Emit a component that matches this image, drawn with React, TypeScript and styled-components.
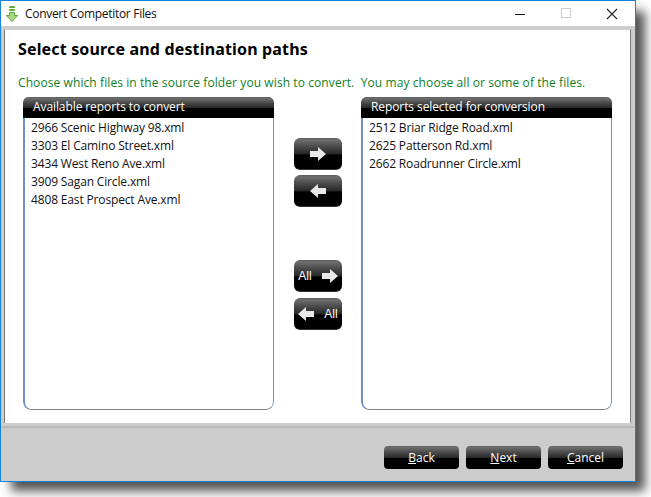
import React from "react";
import styled, { createGlobalStyle } from "styled-components";

const Global = createGlobalStyle`
  html, body { margin: 0; padding: 0; background: #fff; width: 651px; height: 497px; overflow: hidden; }
  * { box-sizing: border-box; }
`;
const glossy = `
  background: linear-gradient(to bottom, #5c5c5c 0%, #6e6e6e 6%, #4a4a4a 28%, #262626 52%, #000 54%, #000 100%);
  color: #fff;
`;
const Win = styled.div`
  width: 636px; height: 482px; border: 1px solid #1883d7;
  background: #cdcdcd; display: flex; flex-direction: column;
  box-shadow: 10px 10px 10px -1px rgba(0,0,0,.68);
  font-family: "Noto Sans", "Open Sans", sans-serif;
`;
const TitleBar = styled.div`
  height: 25px; background: #fff; display: flex; align-items: center; flex: none; padding-left: 5px;
`;
const TitleText = styled.span`
  font-size: 12px; color: #111; margin-left: 7px; font-family: "Open Sans", sans-serif; letter-spacing: -.3px;
`;
const Spacer = styled.div`flex: 1;`;
const WinBtn = styled.div`
  width: 46px; height: 25px; display: flex; align-items: center; justify-content: center;
`;
const Body = styled.div`
  flex: none; height: 394px; margin: 3px 4px 0 3px; background: #fff;
  border-left: 1px solid #7c7c7c; border-right: 1px solid #7c7c7c; border-top: 1px solid #cfcfcf;
  padding: 8px 18px 0 13px; display: flex; flex-direction: column;
`;
const Heading = styled.h1`
  margin: 0; font-size: 16px; line-height: 22px; font-weight: 700; color: #000;
  font-family: "Noto Sans", sans-serif; letter-spacing: .16px;
`;
const Hint = styled.p`
  margin: 15px 0 0; font-size: 12px; line-height: 16px; color: #0f7f1f;
  font-family: "Open Sans", sans-serif; letter-spacing: .09px; white-space: nowrap;
`;
const Columns = styled.div`
  display: flex; margin: 6px 0 0 5px; height: 313px; justify-content: space-between;
`;
const Panel = styled.section`
  width: 251px; height: 313px; display: flex; flex-direction: column;
  border-radius: 5px 5px 8px 8px; overflow: hidden;
`;
const PanelHead = styled.div`
  ${glossy}
  height: 21px; flex: none; font-size: 12px; line-height: 20px; padding-left: 10px; letter-spacing: -.09px;
  font-family: "Open Sans", sans-serif; border-radius: 5px 5px 0 0;
`;
const PanelList = styled.ul`
  flex: 1; margin: 0; padding: 1px 0 0 6px; list-style: none;
  border-left: 2px solid #6a92c7; border-right: 1px solid #6a92c7;
  border-bottom: 1px solid #808080; border-radius: 0 0 8px 8px;
`;
const Item = styled.li`
  font-size: 12px; line-height: 18px; color: #111; font-family: "Open Sans", sans-serif; letter-spacing: -.15px; white-space: nowrap;
`;
const Mid = styled.div`
  width: 48px; display: flex; flex-direction: column; padding-top: 41px; margin-left: 1px;
`;
const Arrow = styled.button<{ $gap: number }>`
  ${glossy}
  width: 48px; height: 32px; margin-top: ${p => p.$gap}px; padding: 0 4px; border: 0; border-radius: 6px;
  border-bottom: 1px solid #333;
  display: flex; align-items: center; justify-content: center; gap: 10px;
  font: 12px "Liberation Sans", sans-serif;
`;
const Footer = styled.div`
  flex: 1; margin-top: 3px; border-top: 2px solid #bbb;
  display: flex; justify-content: flex-end; align-items: flex-start; gap: 7px; padding: 18px 12px 0 0;
  background: #cdcdcd;
`;
const Cmd = styled.button`
  ${glossy}
  width: 75px; height: 23px; border: 0; border-radius: 4px; padding: 0;
  font: 12px/22px "Open Sans", sans-serif; text-align: center;
  u { text-underline-offset: 1px; }
`;
const ArrowIcon = ({ left }: { left?: boolean }) => (
  <svg width="16" height="14" viewBox="0 0 16 14" style={left ? { transform: "scaleX(-1)" } : undefined}>
    <path d="M0 4h8V0l8 7-8 7v-4H0z" fill="#e8e8e8" />
  </svg>
);
const left = ["2966 Scenic Highway 98.xml", "3303 El Camino Street.xml", "3434 West Reno Ave.xml", "3909 Sagan Circle.xml", "4808 East Prospect Ave.xml"];
const right = ["2512 Briar Ridge Road.xml", "2625 Patterson Rd.xml", "2662 Roadrunner Circle.xml"];

export default function App() {
  return (
    <>
      <Global />
      <Win>
        <TitleBar>
          <svg width="12" height="16" viewBox="0 0 12 16">
            <path d="M3.5.5h5v1h-5zM3.5 3.5h5v1h-5z" fill="#d8ecc6" stroke="#5fa83a" />
            <path d="M3.5 6.5h5v3h3L6 15.5.5 9.5h3z" fill="#a8d884" stroke="#5fa83a" />
          </svg>
          <TitleText>Convert Competitor Files</TitleText>
          <Spacer />
          <WinBtn><svg width="12" height="12"><path d="M1 6.5h10" stroke="#111" /></svg></WinBtn>
          <WinBtn><svg width="11" height="11"><rect x=".5" y=".5" width="9" height="9" fill="none" stroke="#ccc" /></svg></WinBtn>
          <WinBtn><svg width="12" height="12"><path d="M1 1l10 10M11 1L1 11" stroke="#222" strokeWidth="1.1" /></svg></WinBtn>
        </TitleBar>
        <Body>
          <Heading>Select source and destination paths</Heading>
          <Hint>Choose which files in the source folder you wish to convert.&nbsp; You may choose all or some of the files.</Hint>
          <Columns>
            <Panel>
              <PanelHead>Available reports to convert</PanelHead>
              <PanelList>{left.map(t => <Item key={t}>{t}</Item>)}</PanelList>
            </Panel>
            <Mid>
              <Arrow $gap={0} aria-label="Add"><ArrowIcon /></Arrow>
              <Arrow $gap={5} aria-label="Remove"><ArrowIcon left /></Arrow>
              <Arrow $gap={53}>All <ArrowIcon /></Arrow>
              <Arrow $gap={6}><ArrowIcon left /> All</Arrow>
            </Mid>
            <Panel>
              <PanelHead>Reports selected for conversion</PanelHead>
              <PanelList>{right.map(t => <Item key={t}>{t}</Item>)}</PanelList>
            </Panel>
          </Columns>
        </Body>
        <Footer>
          <Cmd><u>B</u>ack</Cmd>
          <Cmd><u>N</u>ext</Cmd>
          <Cmd><u>C</u>ancel</Cmd>
        </Footer>
      </Win>
    </>
  );
}
